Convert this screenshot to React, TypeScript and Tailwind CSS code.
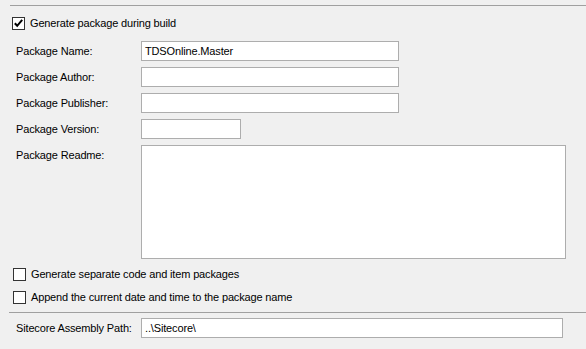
import React from 'react';

function CheckBox({ checked }: { checked?: boolean }) {
  return (
    <div className="w-[13px] h-[13px] border border-[#333333] bg-white flex items-center justify-center shrink-0">
      {checked && (
        <svg width="11" height="11" viewBox="0 0 11 11">
          <path d="M1.8 5.2 L4.2 7.8 L9.2 1.8" fill="none" stroke="#000" strokeWidth="2" />
        </svg>
      )}
    </div>
  );
}

function Field({ label, value, width, height = 20 }: { label: string; value?: string; width: number; height?: number }) {
  const tall = height > 20;
  return (
    <div className={`flex ${tall ? 'items-start' : 'items-center'}`}>
      <div className={`w-[141px] pl-[16px] whitespace-nowrap ${tall ? 'pt-[5px]' : ''}`}>{label}</div>
      <div
        className="border border-[#adadad] bg-white px-[3px] flex items-center whitespace-nowrap"
        style={{ width, height, alignItems: tall ? 'flex-start' : 'center' }}
      >
        {value}
      </div>
    </div>
  );
}

export default function App() {
  return (
    <div className="w-[586px] h-[349px] bg-[#f0f0f0] overflow-hidden text-[11px] tracking-[-0.15px] text-black font-['Liberation_Sans',Arial,sans-serif] leading-none">
      {/* top rule */}
      <div className="pt-[5px]">
        <div className="ml-[10px] h-px bg-[#a0a0a0]" />
      </div>

      <div className="mt-[11px] ml-[12px] flex items-center gap-[5px] h-[13px]">
        <CheckBox checked />
        <span>Generate package during build</span>
      </div>

      <div className="mt-[11px] flex flex-col gap-[6px]">
        <Field label="Package Name:" value="TDSOnline.Master" width={258} />
        <Field label="Package Author:" width={258} />
        <Field label="Package Publisher:" width={258} />
        <Field label="Package Version:" width={100} />
        <Field label="Package Readme:" width={425} height={114} />
      </div>

      <div className="mt-[9px] ml-[13px] flex flex-col gap-[10px]">
        <div className="flex items-center gap-[5px] h-[13px]">
          <CheckBox />
          <span>Generate separate code and item packages</span>
        </div>
        <div className="flex items-center gap-[5px] h-[13px]">
          <CheckBox />
          <span>Append the current date and time to the package name</span>
        </div>
      </div>

      <div className="mt-[8px] ml-[9px] h-px bg-[#a0a0a0]" />

      <div className="mt-[5px]">
        <Field label="Sitecore Assembly Path:" value="..\Sitecore\" width={422} height={20} />
      </div>
    </div>
  );
}
